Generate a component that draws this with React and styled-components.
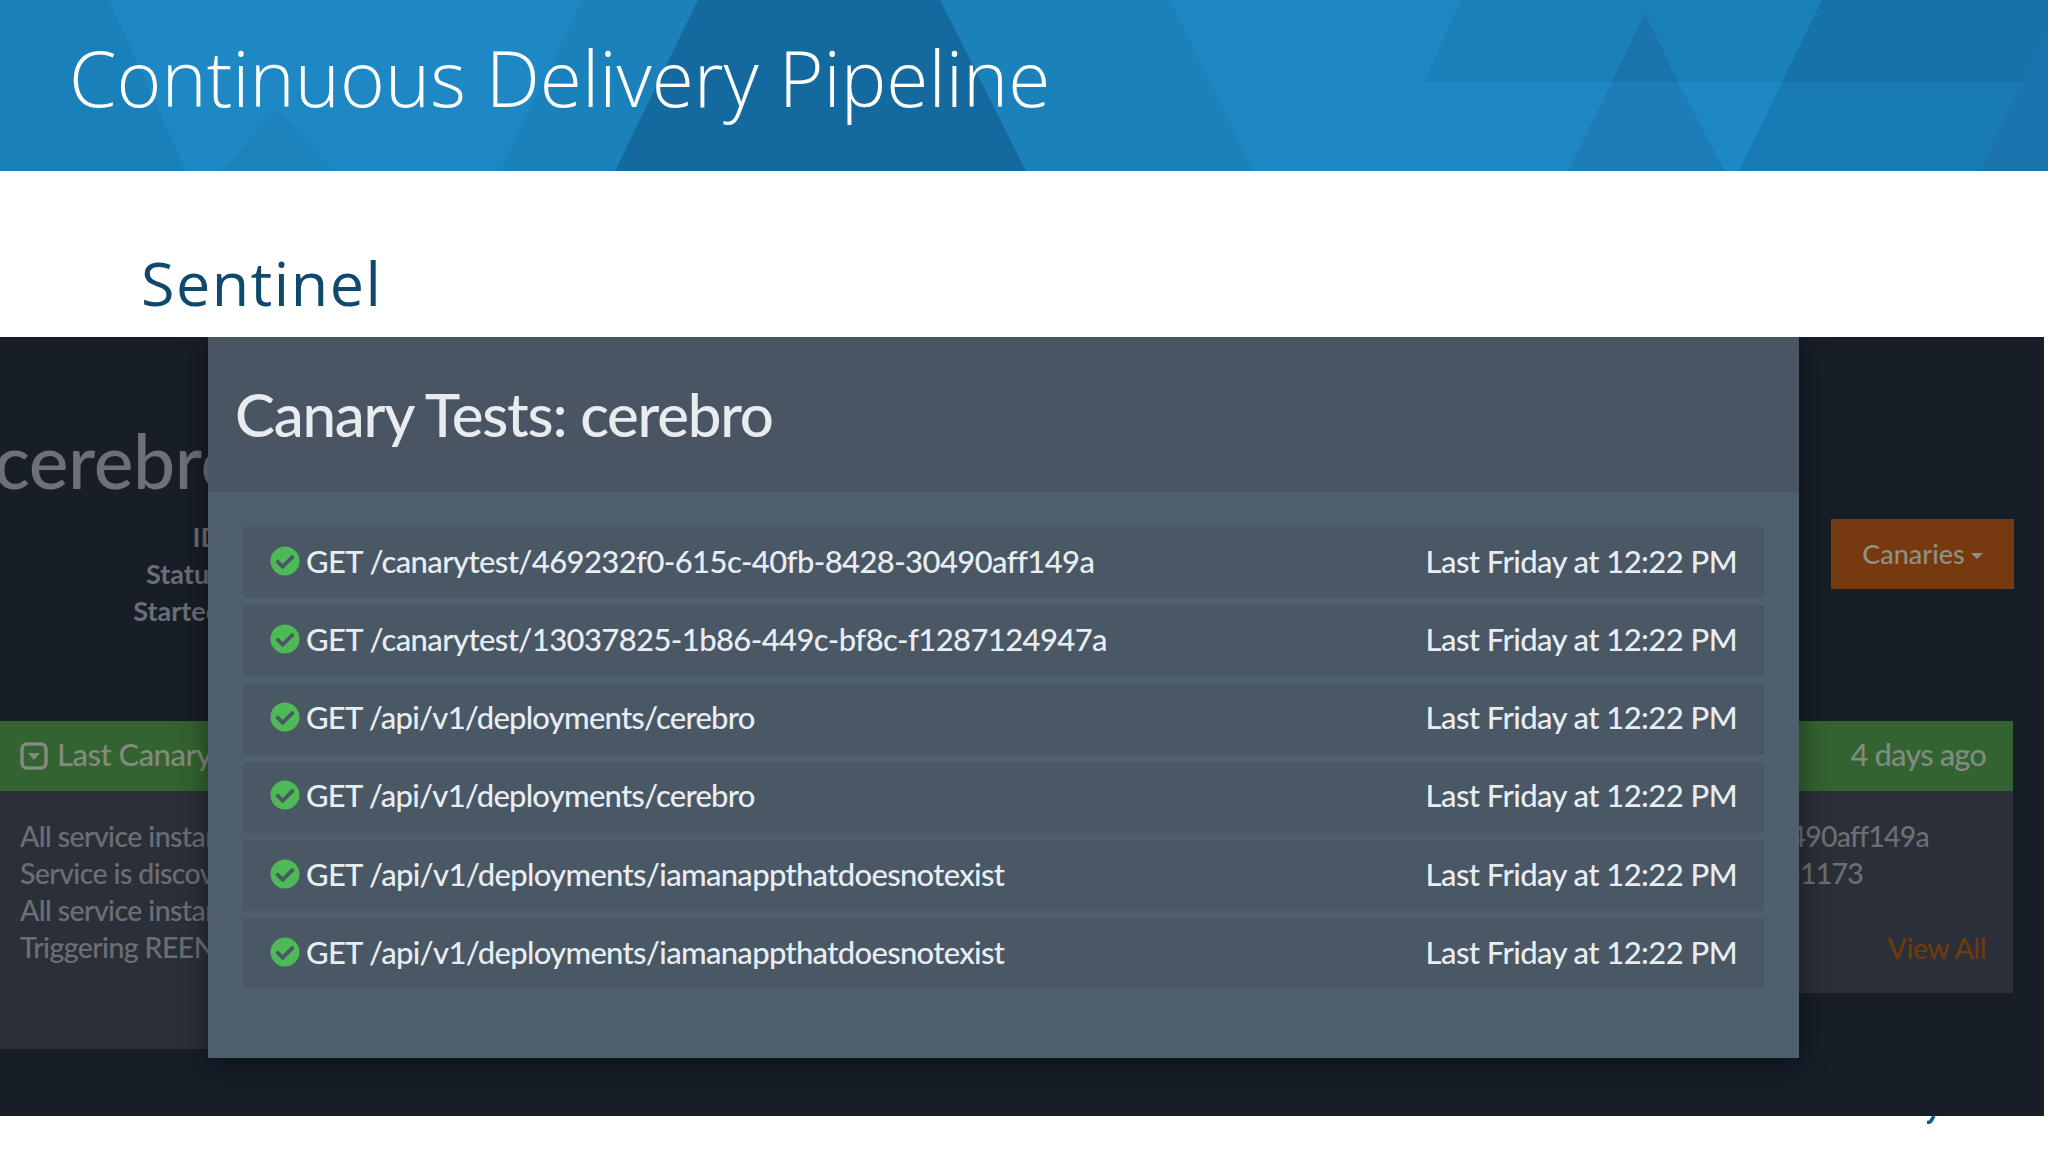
import React from 'react';
import styled, { createGlobalStyle } from 'styled-components';
import { FaCheckCircle } from 'react-icons/fa';

const GlobalStyle = createGlobalStyle`
  html, body {
    margin: 0;
    padding: 0;
    background: #fff;
    overflow: hidden;
  }
`;

const Slide = styled.div`
  width: 2048px;
  height: 1152px;
  overflow: hidden;
  position: relative;
  background: #fff;
`;

const Banner = styled.header`
  position: relative;
  height: 171px;
  background: #1d88c4;
  display: flex;
  align-items: center;
  overflow: hidden;
`;

const BannerArt = styled.svg`
  position: absolute;
  inset: 0;
`;

const Title = styled.h1`
  position: relative;
  margin: -17px 0 0 69px;
  font: 300 76.6px/1 'Open Sans', sans-serif;
  color: #fff;
  white-space: nowrap;
`;

const SubHead = styled.div`
  height: 166px;
  padding: 0 0 0 141px;
  display: flex;
  align-items: flex-end;
`;

const SubTitle = styled.h2`
  margin: 0 0 18px;
  font: 400 61px/1.2 'Open Sans', sans-serif;
  color: #0f4a6e;
  letter-spacing: 1.5px;
`;

const Dashboard = styled.section`
  position: relative;
  width: 2044px;
  height: 779px;
  background: #171e28;
  overflow: hidden;
  font-family: Lato, sans-serif;
`;

const TopRow = styled.div`
  height: 384px;
  display: flex;
  justify-content: space-between;
  padding: 0 30px 0 0;
  box-sizing: border-box;
`;

const ServiceName = styled.div`
  margin: 78px 0 0 -6px;
`;

const ServiceTitle = styled.div`
  font: 500 75px/90px Lato, sans-serif;
  letter-spacing: -0.4px;
  color: #6d7176;
`;

const InfoList = styled.div`
  width: 227px;
  margin-top: 13px;
  text-align: right;
  font: 700 27px/37px Lato, sans-serif;
  color: #6b6f75;
`;

const CanariesButton = styled.div`
  width: 183px;
  height: 70px;
  margin-top: 182px;
  background: #773a0e;
  color: #8f8f87;
  font: 500 27px/70px Lato, sans-serif;
  display: flex;
  align-items: center;
  justify-content: center;
  gap: 6px;
`;

const Caret = styled.span`
  width: 0;
  height: 0;
  margin-top: 3px;
  border-left: 6px solid transparent;
  border-right: 6px solid transparent;
  border-top: 6px solid #8f8f87;
`;

const PanelRow = styled.div`
  display: flex;
  align-items: flex-start;
  justify-content: space-between;
  padding-right: 31px;
`;

const Panel = styled.div`
  width: ${props => props.width}px;
  height: ${props => props.height}px;
  background: #2b3038;
  display: flex;
  flex-direction: column;
`;

const PanelHead = styled.div`
  height: 70px;
  flex: none;
  box-sizing: border-box;
  background: #336330;
  color: #818b7f;
  font: 500 31px/1 Lato, sans-serif;
  letter-spacing: ${props => (props.end ? '-0.9px' : '-0.5px')};
  display: flex;
  align-items: center;
  gap: 9px;
  padding: 0 27px 3px 20px;
  justify-content: ${props => (props.end ? 'flex-end' : 'flex-start')};
`;

const PanelIcon = styled.svg`
  flex: none;
  margin-top: 3px;
`;

const PanelBody = styled.div`
  padding: 27px 0 0 20px;
  font: 500 28.5px/37px Lato, sans-serif;
  letter-spacing: -0.6px;
  color: #6b6f75;
  white-space: nowrap;
`;

const IdList = styled.div`
  padding: 27px 84px 0 0;
  text-align: right;
  font: 500 28.5px/37px Lato, sans-serif;
  letter-spacing: -0.8px;
  color: #6b6f75;
  white-space: nowrap;
`;

const IdLine = styled.div`
  margin-right: ${props => props.inset || 0}px;
`;

const ViewAll = styled.div`
  margin: 38px 27px 0 0;
  text-align: right;
  font: 500 28.5px/37px Lato, sans-serif;
  letter-spacing: -0.5px;
  color: #6f3a10;
`;

const Modal = styled.div`
  position: absolute;
  left: 208px;
  top: 0;
  width: 1591px;
  height: 721px;
  background: #505f6e;
  box-shadow: 0 6px 28px rgba(0, 0, 0, 0.45);
`;

const ModalHeader = styled.div`
  height: 155px;
  background: #4a5563;
  padding-left: 27px;
  display: flex;
  align-items: center;
  box-sizing: border-box;
`;

const ModalTitle = styled.h3`
  margin: -2px 0 0;
  font: 500 60px/1 Lato, sans-serif;
  letter-spacing: -1.25px;
  color: #e9ecef;
`;

const TestList = styled.div`
  padding: 35px;
  display: flex;
  flex-direction: column;
  gap: 7.3px;
`;

const TestRow = styled.div`
  height: 71px;
  box-sizing: border-box;
  background: #4a5765;
  display: flex;
  align-items: center;
  justify-content: space-between;
  padding: 0 27px 3px;
  font: 500 31px/1 Lato, sans-serif;
  letter-spacing: -0.56px;
  color: #e8edf2;
`;

const TestName = styled.div`
  display: flex;
  align-items: center;
  gap: 6px;
  letter-spacing: ${props => props.spacing}px;
  svg {
    color: #4eb957;
    margin-top: -1px;
  }
`;

const FooterMark = styled.svg`
  position: absolute;
  left: 1926px;
  top: 1116px;
`;

const tests = [
  { path: 'GET /canarytest/469232f0-615c-40fb-8428-30490aff149a', spacing: -0.6 },
  { path: 'GET /canarytest/13037825-1b86-449c-bf8c-f1287124947a', spacing: -0.6 },
  { path: 'GET /api/v1/deployments/cerebro', spacing: -0.77 },
  { path: 'GET /api/v1/deployments/cerebro', spacing: -0.77 },
  { path: 'GET /api/v1/deployments/iamanappthatdoesnotexist', spacing: -0.69 },
  { path: 'GET /api/v1/deployments/iamanappthatdoesnotexist', spacing: -0.69 },
];

const App = () => (
  <Slide>
    <GlobalStyle />
    <Banner>
      <BannerArt width="2048" height="171" viewBox="0 0 2048 171">
        <polygon points="0,0 109,0 186,171 0,171" fill="#1a80ba" />
        <polygon points="277,110 221,171 333,171" fill="#1c82bc" />
        <polygon points="582,0 1170,0 1254,171 500,171" fill="#1b81bb" />
        <polygon points="698,0 940,0 1026,171 615,171" fill="#14699f" />
        <polygon points="1461,0 2048,0 2048,82 1424,82" fill="#1a80ba" />
        <polygon points="1822,0 2048,0 2048,82 1782,82" fill="#1672a9" />
        <polygon points="1782,82 2048,82 2048,171 1739,171" fill="#197bb5" />
        <polygon points="1645,13 1678,82 1612,82" fill="#1a74ab" />
        <polygon points="1612,82 1678,82 1725,171 1568,171" fill="#1d7db8" />
        <polygon points="2048,30 2048,171 1979,171" fill="#1a75ae" />
      </BannerArt>
      <Title>Continuous Delivery Pipeline</Title>
    </Banner>
    <SubHead>
      <SubTitle>Sentinel</SubTitle>
    </SubHead>
    <Dashboard>
      <TopRow>
        <ServiceName>
          <ServiceTitle>cerebro</ServiceTitle>
          <InfoList>
            ID
            <br />
            Status
            <br />
            Started
          </InfoList>
        </ServiceName>
        <CanariesButton>
          Canaries
          <Caret />
        </CanariesButton>
      </TopRow>
      <PanelRow>
        <Panel width={1000} height={328}>
          <PanelHead>
            <PanelIcon width="28" height="28" viewBox="0 0 28 28">
              <rect x="2" y="2" width="24" height="24" rx="5" fill="none" stroke="#818b7f" strokeWidth="3.5" />
              <polygon points="8,11 20,11 14,18" fill="#818b7f" />
            </PanelIcon>
            Last Canary Result
          </PanelHead>
          <PanelBody>
            All service instances registered
            <br />
            Service is discoverable
            <br />
            All service instances healthy
            <br />
            Triggering REENABLE
          </PanelBody>
        </Panel>
        <Panel width={1000} height={272}>
          <PanelHead end>4 days ago</PanelHead>
          <IdList>
            <IdLine>469232f0-615c-40fb-8428-30490aff149a</IdLine>
            <IdLine inset={66}>31173</IdLine>
          </IdList>
          <ViewAll>View All</ViewAll>
        </Panel>
      </PanelRow>
      <Modal>
        <ModalHeader>
          <ModalTitle>Canary Tests: cerebro</ModalTitle>
        </ModalHeader>
        <TestList>
          {tests.map((test, i) => (
            <TestRow key={i}>
              <TestName spacing={test.spacing}>
                <FaCheckCircle size={30} />
                {test.path}
              </TestName>
              <span>Last Friday at 12:22 PM</span>
            </TestRow>
          ))}
        </TestList>
      </Modal>
    </Dashboard>
    <FooterMark width="12" height="8" viewBox="0 0 12 8">
      <path d="M8 0 L5 5 Q4 6.5 1 6.5" fill="none" stroke="#0f5c8a" strokeWidth="3.5" />
    </FooterMark>
  </Slide>
);

export default App;
